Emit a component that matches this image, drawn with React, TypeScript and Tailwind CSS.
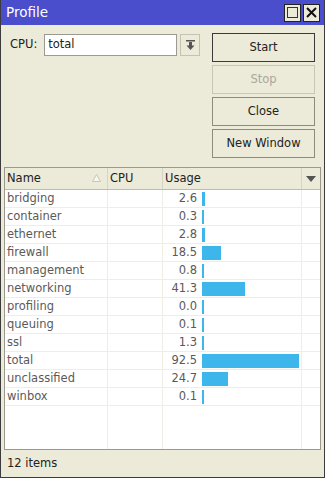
import React from "react";

interface Row {
  name: string;
  usage: number;
}

const rows: Row[] = [
  { name: "bridging", usage: 2.6 },
  { name: "container", usage: 0.3 },
  { name: "ethernet", usage: 2.8 },
  { name: "firewall", usage: 18.5 },
  { name: "management", usage: 0.8 },
  { name: "networking", usage: 41.3 },
  { name: "profiling", usage: 0.0 },
  { name: "queuing", usage: 0.1 },
  { name: "ssl", usage: 1.3 },
  { name: "total", usage: 92.5 },
  { name: "unclassified", usage: 24.7 },
  { name: "winbox", usage: 0.1 },
];

function Btn({ label, primary, disabled }: { label: string; primary?: boolean; disabled?: boolean }) {
  return (
    <button
      type="button"
      className={
        "h-[29px] w-full border bg-[#ecead9] text-[11.5px] " +
        (primary
          ? "border-[#3a3a3a] text-[#222]"
          : disabled
          ? "border-[#c9c6b4] text-[#a9a89e]"
          : "border-[#8d8b7e] text-[#222]")
      }
    >
      {label}
    </button>
  );
}

export default function App() {
  return (
    <div
      className="flex h-[478px] w-[325px] flex-col border-x border-b border-[#3c3c3c] bg-[#ecead9] text-[#333]"
      style={{ fontFamily: '"DejaVu Sans", Verdana, sans-serif' }}
    >
      {/* title bar */}
      <div className="flex h-[25px] items-center justify-between bg-[#4a4dcc] pl-[5px] pr-[4px]">
        <span className="text-[13.5px] text-white">Profile</span>
        <div className="flex gap-[2px]">
          <div className="flex h-[18px] w-[17px] items-center justify-center border border-[#222] bg-[#ecead9]">
            <div className="h-[11px] w-[11px] border border-[#333]" />
          </div>
          <div className="flex h-[18px] w-[17px] items-center justify-center border border-[#222] bg-[#ecead9]">
            <svg width="11" height="11" viewBox="0 0 11 11">
              <path d="M1 1 L10 10 M10 1 L1 10" stroke="#111" strokeWidth="2" />
            </svg>
          </div>
        </div>
      </div>

      {/* top controls */}
      <div className="flex pl-[9px] pr-[9px] pt-[7px]">
        <div className="flex h-[22px] flex-1 items-center pt-[3px]">
          <span className="mr-[7px] text-[11.5px] text-[#222]">CPU:</span>
          <div className="flex h-[22px] w-[133px] items-center border border-[#9a9a90] bg-white pl-[3px] text-[11.5px] text-[#222]">
            total
          </div>
          <div className="ml-[3px] flex h-[22px] w-[20px] items-center justify-center border border-[#c4c2b2] bg-[#ecead9]">
            <svg width="9" height="10" viewBox="0 0 9 10">
              <rect x="0" y="0" width="9" height="1.5" fill="#555" />
              <rect x="3" y="2" width="3" height="4" fill="#555" />
              <path d="M0.5 5.5 L8.5 5.5 L4.5 10 Z" fill="#555" />
            </svg>
          </div>
        </div>
        <div className="flex w-[103px] flex-col gap-[3px] pt-[1px]">
          <Btn label="Start" primary />
          <Btn label="Stop" disabled />
          <Btn label="Close" />
          <Btn label="New Window" />
        </div>
      </div>

      {/* table */}
      <div className="mx-[3px] mt-[9px] flex flex-1 flex-col border border-[#9b998c] bg-white">
        <div className="flex h-[22px] items-center border-b border-[#bdbbae] bg-[#ecead9] text-[11.5px] text-[#222]">
          <div className="relative flex h-full w-[103px] items-center border-r border-[#d6d4c6] pl-[2px]">
            Name
            <svg className="absolute right-[6px] top-[6px]" width="9" height="8" viewBox="0 0 9 8">
              <path d="M4.5 0.5 L8.5 7.5 L0.5 7.5 Z" fill="#f6f5ee" stroke="#c8c6b8" />
            </svg>
          </div>
          <div className="flex h-full w-[55px] items-center border-r border-[#d6d4c6] pl-[2px]">CPU</div>
          <div className="flex h-full flex-1 items-center border-r border-[#d6d4c6] pl-[2px]">Usage</div>
          <div className="flex h-full w-[18px] items-center justify-center">
            <svg width="10" height="6" viewBox="0 0 10 6">
              <path d="M0 0 L10 0 L5 6 Z" fill="#555" />
            </svg>
          </div>
        </div>
        <div className="flex flex-1 flex-col">
          {rows.map((r) => (
            <div key={r.name} className="flex h-[18px] items-center border-b border-[#f0eee2] text-[11.5px] text-[#5a5a5a]">
              <div className="flex h-full w-[103px] items-center border-r border-[#f0eee2] pl-[2px]">{r.name}</div>
              <div className="h-full w-[55px] border-r border-[#f0eee2]" />
              <div className="flex h-full flex-1 items-center border-r border-[#f0eee2]">
                <span className="w-[34px] text-right">{r.usage.toFixed(1)}</span>
                <div className="ml-[5px] h-[14px] bg-[#3db6ec]" style={{ width: Math.max(2, r.usage * 1.05) }} />
              </div>
              <div className="h-full w-[18px]" />
            </div>
          ))}
          <div className="flex flex-1">
            <div className="w-[103px] border-r border-[#f0eee2]" />
            <div className="w-[55px] border-r border-[#f0eee2]" />
            <div className="flex-1 border-r border-[#f0eee2]" />
            <div className="w-[18px]" />
          </div>
        </div>
      </div>

      {/* status */}
      <div className="flex h-[27px] items-center pl-[6px] text-[11.5px] text-[#222]">12 items</div>
    </div>
  );
}
